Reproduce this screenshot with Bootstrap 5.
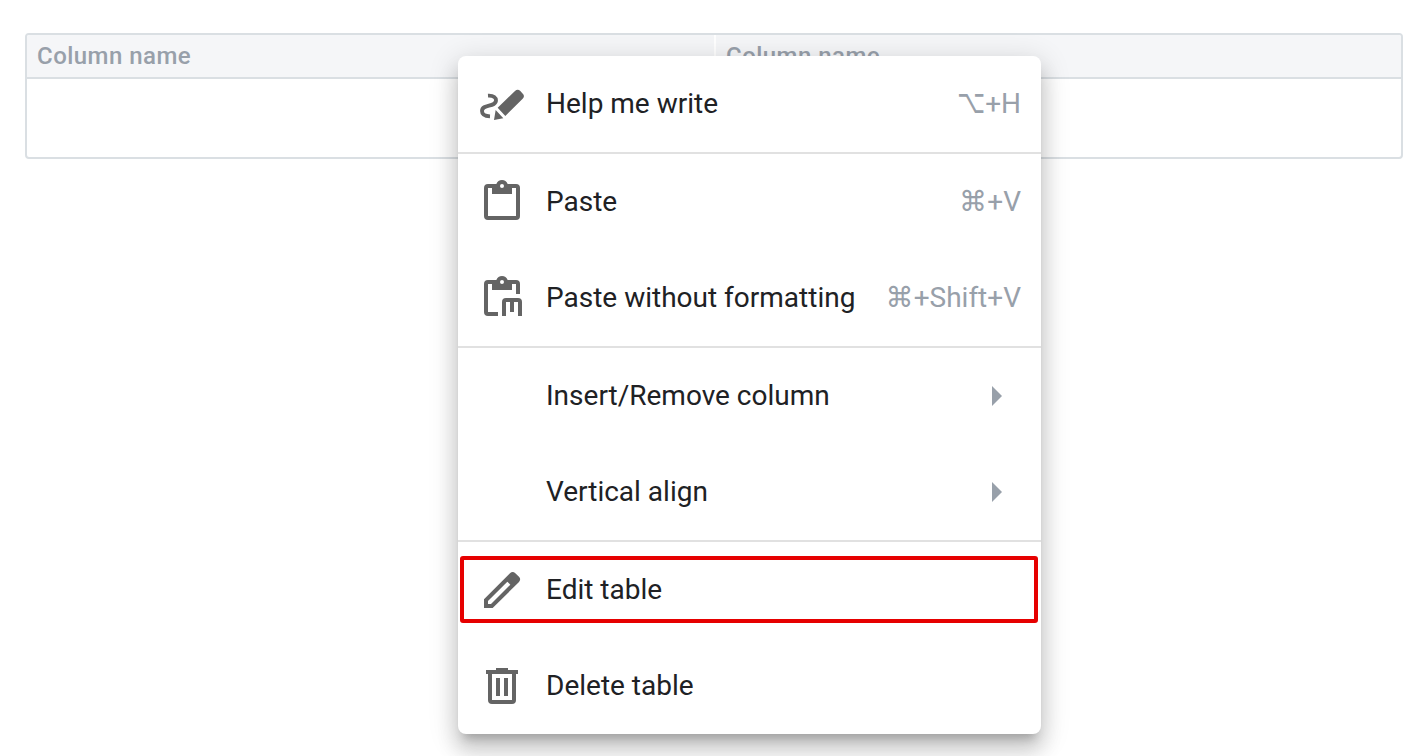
<!DOCTYPE html>
<html lang="en">
<head>
<meta charset="utf-8">
<title>Table menu</title>
<link href="https://cdn.jsdelivr.net/npm/bootstrap@5.3.0/dist/css/bootstrap.min.css" rel="stylesheet">
<style>
body{font-family:Roboto,"DejaVu Sans",sans-serif;height:756px;overflow:hidden;background:#fff}
.page-area{padding:33px 25px 0}
.grid-table{height:126px;border:2px solid #dadfe3;border-radius:4px;overflow:hidden}
.grid-head{height:44px;background:#f5f6f8;border-bottom:2px solid #dadfe3;color:#98a0aa;font-size:24px;letter-spacing:.46px;line-height:42px;font-weight:500}
.grid-head>div:first-child{width:689px;border-right:2px solid #fff}
.grid-head>div{padding-left:10px}
.ctx-menu{position:absolute;left:458px;top:56px;width:583px;border:0;border-radius:8px;padding:0;background:#fff;box-shadow:0 10px 10px -6px rgba(0,0,0,.2),0 16px 20px 2px rgba(0,0,0,.14),0 6px 28px 4px rgba(0,0,0,.12)}
.ctx-item{height:96px;padding:0 20px 0 12px;font-size:28px;line-height:32px;letter-spacing:0;color:#202124}
.ctx-item svg{width:76px;height:60px;flex:none;fill:#646464}
.ctx-item .blank-icon{width:76px}
.keys{color:#98a0aa;font-weight:400;letter-spacing:0}
.opt-key{display:inline-block;transform:translateY(-1px) scale(.87,1.18);transform-origin:100% 60%}
.rule{height:2px;background:#e1e1e1}
.caret{border-left:10px solid #98a0aa;border-top:10px solid transparent;border-bottom:10px solid transparent;margin-right:19px}
.marker{position:absolute;left:2px;top:14px;width:578px;height:67px;border:4px solid #e60000;border-radius:3px}
</style>
<script src="https://cdn.jsdelivr.net/npm/bootstrap@5.3.0/dist/js/bootstrap.bundle.min.js"></script>
</head>
<body>
<main class="page-area position-relative">
  <div class="grid-table">
    <div class="grid-head d-flex"><div>Column name</div><div class="flex-grow-1">Column name</div></div>
  </div>
  <div class="ctx-menu d-flex flex-column">
    <div class="ctx-item d-flex align-items-center">
      <svg viewBox="0 -3 228 180"><path d="M54 62C72 61 78 69 78 76C78 98 36 86 36 108Q36 123 60 124" fill="none" stroke="#646464" stroke-width="11.5"/><path d="M83 98L135 48Q143 41 151 48L159 57Q165 64 158 71L106 123ZM77 105L100 130L72 135Z"/></svg>
      <span>Help me write</span><span class="keys ms-auto"><span class="opt-key">⌥</span>+H</span>
    </div>
    <div class="rule"></div>
    <div class="ctx-item d-flex align-items-center">
      <svg viewBox="0 6 228 180"><path fill-rule="evenodd" d="M54 42H79C82 34 88 30 96 30S110 34 113 42H138Q150 42 150 54V138Q150 150 138 150H54Q42 150 42 138V54Q42 42 54 42ZM54 54V138H138V54H126V72H66V54ZM96 42A6 6 0 1 0 96 54A6 6 0 1 0 96 42Z"/></svg>
      <span>Paste</span><span class="keys ms-auto">⌘+V</span>
    </div>
    <div class="ctx-item d-flex align-items-center">
      <svg viewBox="0 6 228 180"><path fill-rule="evenodd" d="M54 42H79C82 34 88 30 96 30S110 34 113 42H138Q150 42 150 54V84H138V54H126V72H66V54H54V138H84V150H54Q42 150 42 138V54Q42 42 54 42ZM96 42A6 6 0 1 0 96 54A6 6 0 1 0 96 42Z"/><path d="M96 150V108Q96 96 108 96H144Q156 96 156 108V150H144V108H132V138H120V108H108V150Z"/></svg>
      <span>Paste without formatting</span><span class="keys ms-auto">⌘+Shift+V</span>
    </div>
    <div class="rule"></div>
    <div class="ctx-item d-flex align-items-center">
      <span class="blank-icon"></span><span>Insert/Remove column</span><span class="caret ms-auto"></span>
    </div>
    <div class="ctx-item d-flex align-items-center">
      <span class="blank-icon"></span><span>Vertical align</span><span class="caret ms-auto"></span>
    </div>
    <div class="rule"></div>
    <div class="ctx-item d-flex align-items-center position-relative">
      <svg viewBox="0 0 228 180"><path fill-rule="evenodd" d="M42 118L120 40Q128 32 136 40L147 50Q154 58 147 66L68 144H42ZM54 123L112 65L121 74L63 132H54Z"/></svg>
      <span>Edit table</span><span class="marker"></span>
    </div>
    <div class="ctx-item d-flex align-items-center">
      <svg viewBox="0 3 228 180"><path fill-rule="evenodd" d="M48 45H78V39H114V45H144V57H138V135Q138 147 126 147H66Q54 147 54 135V57H48ZM66 57V135H126V57ZM78 69H90V123H78ZM102 69H114V123H102Z"/></svg>
      <span>Delete table</span>
    </div>
  </div>
</main>
</body>
</html>
